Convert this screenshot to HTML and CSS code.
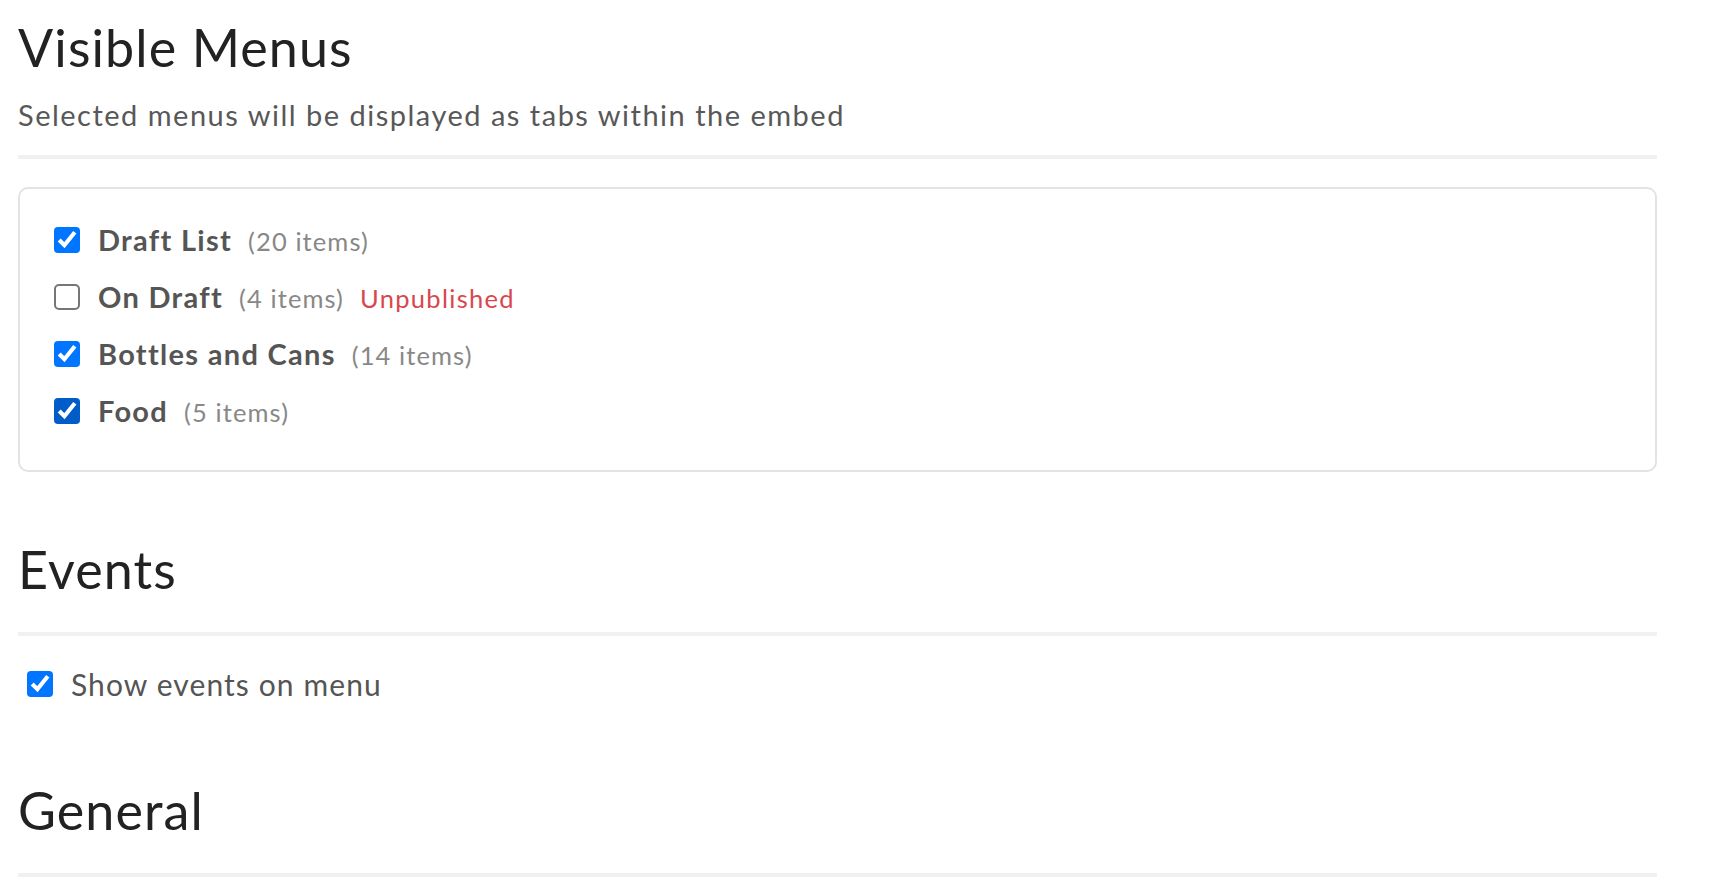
FILE: index.html
```html
<!DOCTYPE html>
<html lang="en">
<head>
<meta charset="utf-8">
<title>Embed settings</title>
<link rel="stylesheet" href="styles.css">
</head>
<body>
<main class="page">
  <section class="section">
    <header class="section-head with-sub">
      <h2 class="section-title">Visible Menus</h2>
      <p class="section-sub">Selected menus will be displayed as tabs within the embed</p>
    </header>
    <div class="card">
      <label class="menu-row">
        <input type="checkbox" class="cb" checked>
        <span class="menu-text"><span class="menu-name">Draft List</span><span class="menu-count">(20 items)</span></span>
      </label>
      <label class="menu-row">
        <input type="checkbox" class="cb">
        <span class="menu-text"><span class="menu-name">On Draft</span><span class="menu-count">(4 items)</span><span class="menu-status">Unpublished</span></span>
      </label>
      <label class="menu-row">
        <input type="checkbox" class="cb" checked>
        <span class="menu-text"><span class="menu-name">Bottles and Cans</span><span class="menu-count">(14 items)</span></span>
      </label>
      <label class="menu-row">
        <input type="checkbox" class="cb cb-hover" checked>
        <span class="menu-text"><span class="menu-name">Food</span><span class="menu-count">(5 items)</span></span>
      </label>
    </div>
  </section>

  <section class="section section-events">
    <header class="section-head">
      <h2 class="section-title">Events</h2>
    </header>
    <label class="option-row">
      <input type="checkbox" class="cb" checked>
      <span class="option-text">Show events on menu</span>
    </label>
  </section>

  <section class="section section-general">
    <header class="section-head">
      <h2 class="section-title">General</h2>
    </header>
  </section>
</main>
</body>
</html>
```
FILE: styles.css
```css
* { box-sizing: border-box; }

html, body {
  margin: 0;
  padding: 0;
  background: #ffffff;
}

body {
  font-family: Lato, "Open Sans", "Liberation Sans", sans-serif;
  color: #555555;
  overflow: hidden;
}

.page {
  padding: 16px 57px 0 18px;
}

.section-head {
  border-bottom: 4px solid #f1f1f1;
  padding-bottom: 32px;
}

.section-head.with-sub {
  padding-bottom: 22px;
}

.section-title {
  margin: 0;
  font-size: 52px;
  line-height: 62px;
  font-weight: 400;
  letter-spacing: 1.1px;
  color: #222222;
}

.section-sub {
  margin: 19px 0 0 0;
  font-size: 29px;
  line-height: 36px;
  letter-spacing: 1.5px;
  color: #585858;
}

.card {
  margin-top: 28px;
  border: 2px solid #e3e3e3;
  border-radius: 10px;
  padding: 33px 34px 41px 34px;
  display: flex;
  flex-direction: column;
  gap: 21px;
}

.cb {
  zoom: 2;
  width: 13px;
  height: 13px;
  margin: 0;
  flex: none;
}

.cb-hover {
  accent-color: #005cc8;
}

.menu-row {
  display: flex;
  align-items: center;
  gap: 18px;
  height: 36px;
}

.menu-text {
  display: flex;
  align-items: baseline;
  gap: 16px;
  position: relative;
  top: -1px;
}

.menu-name {
  font-size: 29px;
  font-weight: 700;
  letter-spacing: 1.3px;
  color: #555555;
}

.menu-count {
  font-size: 25.5px;
  letter-spacing: 1.1px;
  color: #888888;
}

.menu-status {
  font-size: 25.5px;
  letter-spacing: 1.3px;
  color: #d9474e;
}

.section-events {
  margin-top: 66px;
}

.option-row {
  display: flex;
  align-items: center;
  gap: 18px;
  height: 36px;
  margin-top: 30px;
  padding-left: 9px;
}

.option-text {
  font-size: 30px;
  letter-spacing: 1.1px;
  color: #555555;
}

.section-general {
  margin-top: 77px;
}
```
